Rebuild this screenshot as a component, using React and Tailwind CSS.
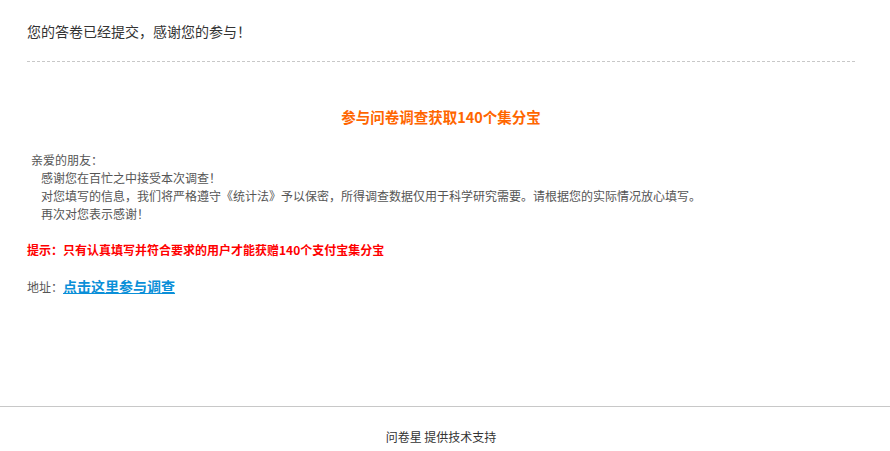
import React from 'react';

const font = { fontFamily: '"Microsoft YaHei", "Noto Sans CJK SC", "Noto Sans", sans-serif' };

export default function App() {
  return (
    <div className="min-h-screen bg-white flex flex-col" style={font}>
      <div className="pl-[27px] pr-[35px]">
        <div className="pt-[21px] pb-[20px] text-[14px] leading-[20px] text-[#333]">
          您的答卷已经提交，感谢您的参与！
        </div>
        <div className="border-t border-dashed border-[#c8c8c8]" />

        <div className="mt-[44px] text-center text-[14.5px] leading-[22px] font-bold text-[#ff6600]">
          参与问卷调查获取140个集分宝
        </div>

        <div className="mt-[23px] text-[12px] leading-[18px] text-[#555]">
          <div className="pl-[4px]">亲爱的朋友：</div>
          <div className="pl-[14px]">感谢您在百忙之中接受本次调查！</div>
          <div className="pl-[14px]">
            对您填写的信息，我们将严格遵守《统计法》予以保密，所得调查数据仅用于科学研究需要。请根据您的实际情况放心填写。
          </div>
          <div className="pl-[14px]">再次对您表示感谢！</div>
        </div>

        <div className="mt-[18px] text-[12px] leading-[18px] font-bold text-[#ff0000]">
          提示：只有认真填写并符合要求的用户才能获赠140个支付宝集分宝
        </div>

        <div className="mt-[16px] text-[12px] leading-[22px] text-[#555]">
          地址：
          <a href="#" className="text-[14px] font-bold text-[#0a8fd8] underline">
            点击这里参与调查
          </a>
        </div>
      </div>

      <div className="mt-[108px] border-t border-[#c8c8c8] pt-[21px] pr-[8px] text-center text-[12px] leading-[18px] text-[#333]">
        问卷星 提供技术支持
      </div>
    </div>
  );
}
